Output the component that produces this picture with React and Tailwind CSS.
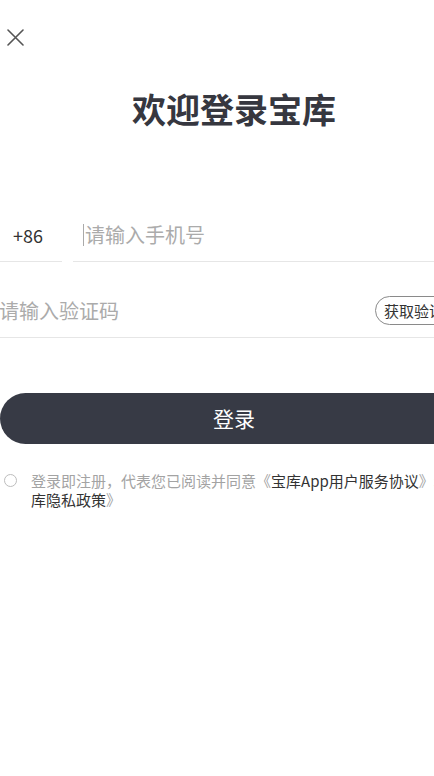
const Close = () => (
    <svg width="17" height="17" viewBox="0 0 17 17" fill="none" stroke="#555" strokeWidth="1.6" strokeLinecap="round">
        <path d="M1 1L16 16M16 1L1 16" />
    </svg>
);

const App = () => {
    return (
        <div className="w-[434px] h-[776px] overflow-hidden bg-white font-['Noto_Sans_CJK_SC',sans-serif]">
            <div className="w-[468px]">
                <div className="pt-[29px] pl-[7px]">
                    <Close />
                </div>

                <h1 className="mt-[46px] text-center text-[34px] leading-[34px] font-bold text-[#36373f]">欢迎登录宝库</h1>

                <div className="mt-[95px] flex">
                    <div className="w-[62px] border-b border-[#e6e6e6] pb-[12px] pl-[13px] text-[18px] leading-[28px] text-[#333]">+86</div>
                    <div className="ml-[11px] flex-1 flex items-center border-b border-[#e6e6e6] pb-[12px] pl-[10px]">
                        <span className="w-px h-[22px] bg-[#aaa]"></span>
                        <span className="ml-[1px] text-[20px] leading-[28px] text-[#ababab]">请输入手机号</span>
                    </div>
                </div>

                <div className="mt-[34px] flex items-center justify-between border-b border-[#e6e6e6] pb-[12px]">
                    <span className="-ml-[1px] text-[20px] leading-[28px] text-[#ababab]">请输入验证码</span>
                    <button className="h-[29px] px-[8px] rounded-full border border-[#8a8a8a] text-[15px] leading-[27px] text-[#333]">获取验证码</button>
                </div>

                <button className="mt-[55px] w-full h-[51px] rounded-full bg-[#373a45] text-white text-[21px] leading-[51px]">登录</button>

                <div className="mt-[27px] flex items-start">
                    <span className="ml-[4px] mt-[3px] w-[13px] h-[13px] shrink-0 rounded-full border-[1.5px] border-[#bdbdbd]"></span>
                    <p className="ml-[14px] w-[450px] shrink-0 text-[15px] leading-[19px] text-[#a3a3a3]">
                        登录即注册，代表您已阅读并同意《<span className="text-[#333]">宝库App用户服务协议</span>》和《<span className="text-[#333]">宝库隐私政策</span>》
                    </p>
                </div>
            </div>
        </div>
    );
};

export default App;
